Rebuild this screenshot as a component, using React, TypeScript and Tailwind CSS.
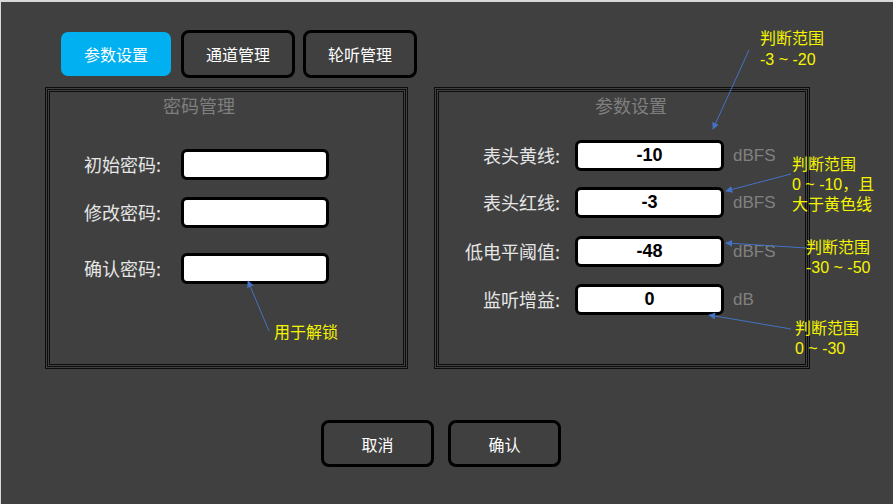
import type { ReactNode } from "react";

const CJK = "font-['Noto_Sans_CJK_SC',sans-serif]";
const LATIN = "font-['Liberation_Sans','Noto_Sans_CJK_SC',sans-serif]";

// triple black line frame, like the old group box
function GroupBox({ width, children }: { width: string; children: ReactNode }) {
    return (
        <div className={`${width} h-[282px] border border-[#0d0d0d] p-px`}>
            <div className="h-full border border-[#0d0d0d] p-px">
                <div className="h-full border border-[#0d0d0d]">{children}</div>
            </div>
        </div>
    );
}

function Field({ value, width }: { value?: string; width: string }) {
    return (
        <div
            className={`${width} flex h-[31px] items-center justify-center rounded-[6px] border-[3px] border-black bg-white ${LATIN} text-[18px] font-bold text-black`}
        >
            {value}
        </div>
    );
}

const paramRows = [
    { label: "表头黄线:", value: "-10", unit: "dBFS", mt: "mt-[22px]" },
    { label: "表头红线:", value: "-3", unit: "dBFS", mt: "mt-[16px]" },
    { label: "低电平阈值:", value: "-48", unit: "dBFS", mt: "mt-[18px]" },
    { label: "监听增益:", value: "0", unit: "dB", mt: "mt-[17px]" },
];

const pwdRows = [
    { label: "初始密码:", mt: "mt-[31px]" },
    { label: "修改密码:", mt: "mt-[17px]" },
    { label: "确认密码:", mt: "mt-[25px]" },
];

const arrows = [
    [748, 48, 712, 127],
    [790, 172, 725, 189],
    [806, 246, 725, 241],
    [790, 327, 708, 313],
    [268, 329, 247, 279],
];

export default function App() {
    return (
        <div className={`relative h-[504px] w-[893px] overflow-hidden border-l border-t-2 border-[#d9d9d9] bg-[#404040] ${CJK}`}>
            {/* tabs */}
            <div className="ml-[60px] mt-[28px] flex h-[48px] items-center">
                <div className="flex h-[44px] w-[110px] items-center justify-center rounded-[7px] bg-[#00b0f0] text-[16px] text-white">
                    参数设置
                </div>
                <div className="ml-[10px] flex h-[48px] w-[114px] items-center justify-center rounded-[8px] border-[3px] border-black text-[16px] text-white">
                    通道管理
                </div>
                <div className="ml-[8px] flex h-[48px] w-[114px] items-center justify-center rounded-[8px] border-[3px] border-black text-[16px] text-white">
                    轮听管理
                </div>
            </div>

            {/* panels */}
            <div className="ml-[44px] mt-[9px] flex gap-[26px]">
                <GroupBox width="w-[363px]">
                    <div className="h-[26px] pl-[113px] text-[18px] leading-[26px] text-[#7f7f7f]">密码管理</div>
                    {pwdRows.map((r) => (
                        <div key={r.label} className={`${r.mt} flex h-[31px] items-center pl-[34px]`}>
                            <div className="w-[97px] text-[18px] text-[#e6e6e6]">{r.label}</div>
                            <Field width="w-[148px]" />
                        </div>
                    ))}
                </GroupBox>

                <GroupBox width="w-[376px]">
                    <div className="h-[26px] pl-[156px] text-[18px] leading-[26px] text-[#7f7f7f]">参数设置</div>
                    {paramRows.map((r) => (
                        <div key={r.label} className={`${r.mt} flex h-[31px] items-center`}>
                            <div className="w-[121px] text-right text-[18px] text-[#e6e6e6]">{r.label}</div>
                            <div className="ml-[15px]">
                                <Field width="w-[149px]" value={r.value} />
                            </div>
                            <div className={`ml-[9px] ${LATIN} text-[17px] text-[#808080]`}>{r.unit}</div>
                        </div>
                    ))}
                </GroupBox>
            </div>

            {/* bottom buttons */}
            <div className="ml-[320px] mt-[51px] flex gap-[14px]">
                <div className="flex h-[47px] w-[113px] items-center justify-center rounded-[8px] border-[3px] border-black text-[16px] text-white">
                    取消
                </div>
                <div className="flex h-[47px] w-[113px] items-center justify-center rounded-[8px] border-[3px] border-black text-[16px] text-white">
                    确认
                </div>
            </div>

            {/* annotation layer */}
            <svg className="pointer-events-none absolute left-0 top-0" width="893" height="504">
                <defs>
                    <marker id="ah" viewBox="0 0 10 10" refX="9" refY="5" markerWidth="7" markerHeight="7" markerUnits="userSpaceOnUse" orient="auto">
                        <path d="M0 0 L10 5 L0 10 z" fill="#4472c4" />
                    </marker>
                </defs>
                {arrows.map(([x1, y1, x2, y2], i) => (
                    <line key={i} x1={x1} y1={y1} x2={x2} y2={y2} stroke="#4472c4" strokeWidth="1" markerEnd="url(#ah)" />
                ))}
            </svg>

            <div className={`pointer-events-none absolute left-[759px] top-[26px] ${LATIN} text-[16px] leading-[21px] text-[#f5f500]`}>
                <div>判断范围</div>
                <div>-3 ~ -20</div>
            </div>
            <div className={`pointer-events-none absolute left-[791px] top-[153px] ${LATIN} text-[16px] leading-[20px] text-[#f5f500]`}>
                <div>判断范围</div>
                <div className="whitespace-nowrap">0 ~ -10，且</div>
                <div>大于黄色线</div>
            </div>
            <div className={`pointer-events-none absolute left-[805px] top-[236px] ${LATIN} text-[16px] leading-[20px] text-[#f5f500]`}>
                <div>判断范围</div>
                <div className="whitespace-nowrap">-30 ~ -50</div>
            </div>
            <div className={`pointer-events-none absolute left-[794px] top-[317px] ${LATIN} text-[16px] leading-[20px] text-[#f5f500]`}>
                <div>判断范围</div>
                <div>0 ~ -30</div>
            </div>
            <div className={`pointer-events-none absolute left-[273px] top-[321px] ${LATIN} text-[16px] leading-[20px] text-[#f5f500]`}>
                用于解锁
            </div>
        </div>
    );
}
